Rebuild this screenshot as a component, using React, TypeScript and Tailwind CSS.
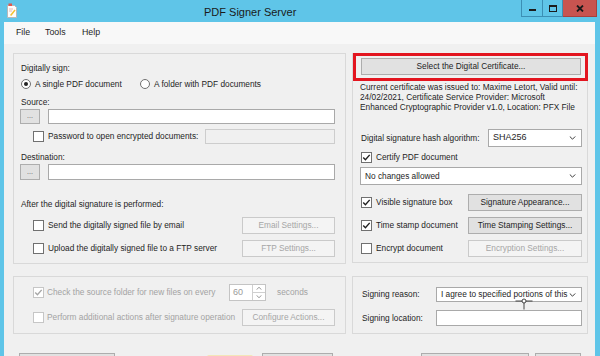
import clsx from "clsx";
import type { ReactNode } from "react";

const font = "font-['Liberation_Sans',Arial,sans-serif]";

function Check({ checked = false, disabled = false }: { checked?: boolean; disabled?: boolean }) {
  return (
    <span
      className={clsx(
        "flex h-[11px] w-[11px] shrink-0 items-center justify-center border bg-white",
        disabled ? "border-[#c6c6c6]" : "border-[#707070]"
      )}
    >
      {checked && (
        <svg viewBox="0 0 11 11" className="h-[9px] w-[9px]">
          <path
            d="M1.5 5.6 L4.2 8.3 L9.4 2.3"
            fill="none"
            stroke={disabled ? "#a6a6a6" : "#1f1f1f"}
            strokeWidth="1.7"
          />
        </svg>
      )}
    </span>
  );
}

function Radio({ on = false }: { on?: boolean }) {
  return (
    <span className="flex h-[10px] w-[10px] shrink-0 items-center justify-center rounded-full border border-[#707070] bg-white">
      {on && <span className="h-[4px] w-[4px] rounded-full bg-[#222]" />}
    </span>
  );
}

function Btn({ children, disabled = false, className }: { children?: ReactNode; disabled?: boolean; className?: string }) {
  return (
    <div
      className={clsx(
        "flex shrink-0 items-center justify-center whitespace-nowrap border",
        disabled ? "border-[#cacaca] bg-[#f4f4f4] text-[#a6a6a6]" : "border-[#adadad] bg-[#e1e1e1] text-[#1e1e1e]",
        className
      )}
    >
      {children}
    </div>
  );
}

function Select({ value, className, children }: { value: string; className?: string; children?: ReactNode }) {
  return (
    <div className={clsx("relative flex shrink-0 items-center border border-[#a9a9a9] bg-white pl-[4px] pr-[5px]", className)}>
      <span className="flex-1 overflow-hidden whitespace-nowrap">{value}</span>
      <svg viewBox="0 0 8 5" className="h-[4px] w-[7px] shrink-0">
        <path d="M0.6 0.6 L4 4 L7.4 0.6" fill="none" stroke="#333" strokeWidth="1.2" />
      </svg>
      {children}
    </div>
  );
}

function AppIcon() {
  return (
    <svg viewBox="0 0 10 15" className="ml-[7px] mt-[3px] h-[15px] w-[10px] shrink-0">
      <path d="M0.5 2.5 H7.5 L9.5 4.5 V14.5 H0.5 Z" fill="#fdfdfd" stroke="#b9b9b9" />
      <path d="M1.5 0.5 H5 V3 H1.5 Z" fill="#e0574e" />
      <path d="M3 12 L7.5 6.5 L8.6 7.6 L4.2 13 Z" fill="#f1c232" />
      <path d="M2 6 H6 M2 8 H5" stroke="#e5b8b3" />
    </svg>
  );
}

export default function App() {
  return (
    <div className={clsx("flex h-[356px] w-[600px] flex-col overflow-hidden bg-[#5fc5e8] text-[8.3px] text-[#1e1e1e]", font)}>
      {/* title bar */}
      <div className="flex h-[22px] shrink-0 items-start">
        <AppIcon />
        <span className="ml-[187px] mt-[4px] text-[11px] leading-[16px] text-[#1a1a1a]">PDF Signer Server</span>
        <div className="ml-auto mr-[3px] flex h-[17px]">
          <div className="flex w-[22px] items-end justify-center border border-t-0 border-[#3b8fb5] pb-[5px]">
            <span className="h-[2px] w-[7px] bg-[#1c1c1c]" />
          </div>
          <div className="flex w-[20px] items-center justify-center border border-l-0 border-t-0 border-[#3b8fb5]">
            <span className="h-[7px] w-[8px] border border-t-2 border-[#1c1c1c]" />
          </div>
          <div className="flex w-[34px] items-center justify-center border border-l-0 border-t-0 border-[#a8403d] bg-[#c85450]">
            <svg viewBox="0 0 8 7" className="h-[7px] w-[8px]">
              <path d="M1 0.5 L7 6.5 M7 0.5 L1 6.5" stroke="#1a1a1a" strokeWidth="1.8" />
            </svg>
          </div>
        </div>
      </div>

      <div className="ml-[4px] mr-[5px] flex flex-1 flex-col bg-[#f0f0f0]">
        {/* menu */}
        <div className="flex h-[22px] shrink-0 items-center bg-[#f8f8f8] pl-[12px] text-[8.8px]">
          <span className="w-[29px]">File</span>
          <span className="w-[37px]">Tools</span>
          <span>Help</span>
        </div>

        <div className="grid grid-cols-[333px_236px] gap-x-[6px] gap-y-[12px] pl-[9px] pt-[9px]">
          {/* left top panel */}
          <div className="flex h-[211px] flex-col border border-[#d9d9d9] pl-[7px] pr-[10px]">
            <div className="mt-[9px] h-[10px] leading-[10px]">Digitally sign:</div>
            <div className="mt-[5px] flex h-[12px] items-center">
              <div className="flex w-[119px] items-center gap-[4px]">
                <Radio on />
                <span>A single PDF document</span>
              </div>
              <div className="flex items-center gap-[4px]">
                <Radio />
                <span>A folder with PDF documents</span>
              </div>
            </div>
            <div className="mt-[7px] h-[10px] leading-[10px]">Source:</div>
            <div className="mt-[2px] flex h-[15px] items-stretch">
              <Btn className="-ml-[1px] w-[20px] bg-[#dcdcdc] text-[7px] text-[#555]">...</Btn>
              <div className="ml-[8px] flex-1 border border-[#a9a9a9] bg-white" />
            </div>
            <div className="mt-[5px] flex h-[15px] items-center">
              <span className="ml-[12px]">
                <Check />
              </span>
              <span className="ml-[4px]">Password to open encrypted documents:</span>
              <div className="ml-auto h-full w-[130px] border border-[#cdcdcd] bg-[#f0f0f0]" />
            </div>
            <div className="mt-[8px] h-[10px] leading-[10px]">Destination:</div>
            <div className="mt-[2px] flex h-[16px] items-stretch">
              <Btn className="-ml-[1px] w-[20px] bg-[#dcdcdc] text-[7px] text-[#555]">...</Btn>
              <div className="ml-[8px] flex-1 border border-[#a9a9a9] bg-white" />
            </div>
            <div className="mt-[19px] h-[10px] leading-[10px]">After the digital signature is performed:</div>
            <div className="mt-[8px] flex h-[17px] items-center">
              <span className="ml-[12px]">
                <Check />
              </span>
              <span className="ml-[4px]">Send the digitally signed file by email</span>
              <Btn disabled className="ml-auto h-full w-[93px]">
                Email Settings...
              </Btn>
            </div>
            <div className="mt-[6px] flex h-[17px] items-center">
              <span className="ml-[12px]">
                <Check />
              </span>
              <span className="ml-[4px]">Upload the digitally signed file to a FTP server</span>
              <Btn disabled className="ml-auto h-full w-[93px]">
                FTP Settings...
              </Btn>
            </div>
          </div>

          {/* right top panel */}
          <div className="flex h-[210px] flex-col border border-[#d9d9d9] pr-[5px]">
            <div className="-mr-[6px] -mt-[1px] ml-0 h-[28px] border-[3px] border-[#e3151f] pl-[5px] pr-[4px] pt-[2px]">
              <Btn className="h-[17px] w-full">Select the Digital Certificate...</Btn>
            </div>
            <div className="mt-[1px] whitespace-nowrap pl-[7px] leading-[10px]">
              Current certificate was issued to: Maxime Letort, Valid until:
              <br />
              24/02/2021, Certificate Service Provider: Microsoft
              <br />
              Enhanced Cryptographic Provider v1.0, Location: PFX File
            </div>
            <div className="mt-[17px] flex h-[18px] items-center pl-[8px]">
              <span>Digital signature hash algorithm:</span>
              <Select value="SHA256" className="ml-auto h-full w-[94px] text-[9px]" />
            </div>
            <div className="mt-[4px] flex h-[12px] items-center gap-[4px] pl-[8px]">
              <Check checked />
              <span>Certify PDF document</span>
            </div>
            <div className="mt-[4px] flex h-[18px] pl-[7px]">
              <Select value="No changes allowed" className="h-full flex-1" />
            </div>
            <div className="mt-[9px] flex h-[17px] items-center pl-[8px]">
              <Check checked />
              <span className="ml-[4px]">Visible signature box</span>
              <Btn className="ml-auto h-full w-[114px]">Signature Appearance...</Btn>
            </div>
            <div className="mt-[6px] flex h-[17px] items-center pl-[8px]">
              <Check checked />
              <span className="ml-[4px]">Time stamp document</span>
              <Btn className="ml-auto h-full w-[114px]">Time Stamping Settings...</Btn>
            </div>
            <div className="mt-[6px] flex h-[17px] items-center pl-[8px]">
              <Check />
              <span className="ml-[4px]">Encrypt document</span>
              <Btn disabled className="ml-auto h-full w-[114px]">
                Encryption Settings...
              </Btn>
            </div>
          </div>

          {/* left bottom panel */}
          <div className="flex h-[58px] flex-col border border-[#d9d9d9] pl-[7px] pr-[10px] text-[#a3a3a3]">
            <div className="mt-[7px] flex h-[17px] items-center">
              <div className="ml-[12px] flex w-[196px] items-center gap-[3px]">
                <Check checked disabled />
                <span>Check the source folder for new files on every</span>
              </div>
              <div className="flex h-full w-[37px] border border-[#c4c4c4] bg-white">
                <span className="flex-1 pl-[3px] text-[9px] leading-[15px] text-[#9a9a9a]">60</span>
                <div className="flex w-[13px] flex-col border-l border-[#cfcfcf]">
                  <div className="flex flex-1 items-center justify-center border-b border-[#cfcfcf]">
                    <svg viewBox="0 0 6 3" className="h-[3px] w-[6px]">
                      <path d="M0.5 2.7 L3 0.3 L5.5 2.7" fill="none" stroke="#9a9a9a" />
                    </svg>
                  </div>
                  <div className="flex flex-1 items-center justify-center">
                    <svg viewBox="0 0 6 3" className="h-[3px] w-[6px]">
                      <path d="M0.5 0.3 L3 2.7 L5.5 0.3" fill="none" stroke="#9a9a9a" />
                    </svg>
                  </div>
                </div>
              </div>
              <span className="ml-[11px]">seconds</span>
            </div>
            <div className="mt-[8px] flex h-[17px] items-center">
              <span className="ml-[12px]">
                <Check disabled />
              </span>
              <span className="ml-[3px]">Perform additional actions after signature operation</span>
              <Btn disabled className="ml-auto h-full w-[93px]">
                Configure Actions...
              </Btn>
            </div>
          </div>

          {/* right bottom panel */}
          <div className="flex h-[58px] flex-col border border-[#d9d9d9] pl-[9px] pr-[5px]">
            <div className="mt-[10px] flex h-[15px] items-center">
              <span>Signing reason:</span>
              <Select value="I agree to specified portions of this" className="ml-auto h-full w-[146px]">
                <svg viewBox="0 0 18 12" className="absolute left-[78px] top-[10px] h-[12px] w-[18px]">
                  <path d="M0.5 3 H17.5 M9 3 V11.5" stroke="#333" strokeWidth="0.9" />
                  <circle cx="9" cy="3" r="2" fill="#fff" stroke="#333" strokeWidth="0.9" />
                </svg>
              </Select>
            </div>
            <div className="mt-[8px] flex h-[16px] items-center">
              <span>Signing location:</span>
              <div className="ml-auto h-full w-[146px] border border-[#a9a9a9] bg-white" />
            </div>
          </div>
        </div>

        {/* bottom buttons, mostly cut off */}
        <div className="mt-[19px] flex h-[22px] shrink-0">
          <Btn className="ml-[15px] w-[96px]" />
          <div className="ml-[92px] mt-[2px] h-[10px] w-[46px] rounded-[2px] bg-[#f3e6b8]" />
          <Btn className="ml-[9px] w-[71px]" />
          <Btn className="ml-[88px] w-[108px]" />
          <Btn className="ml-[6px] w-[46px]" />
        </div>
      </div>
    </div>
  );
}
